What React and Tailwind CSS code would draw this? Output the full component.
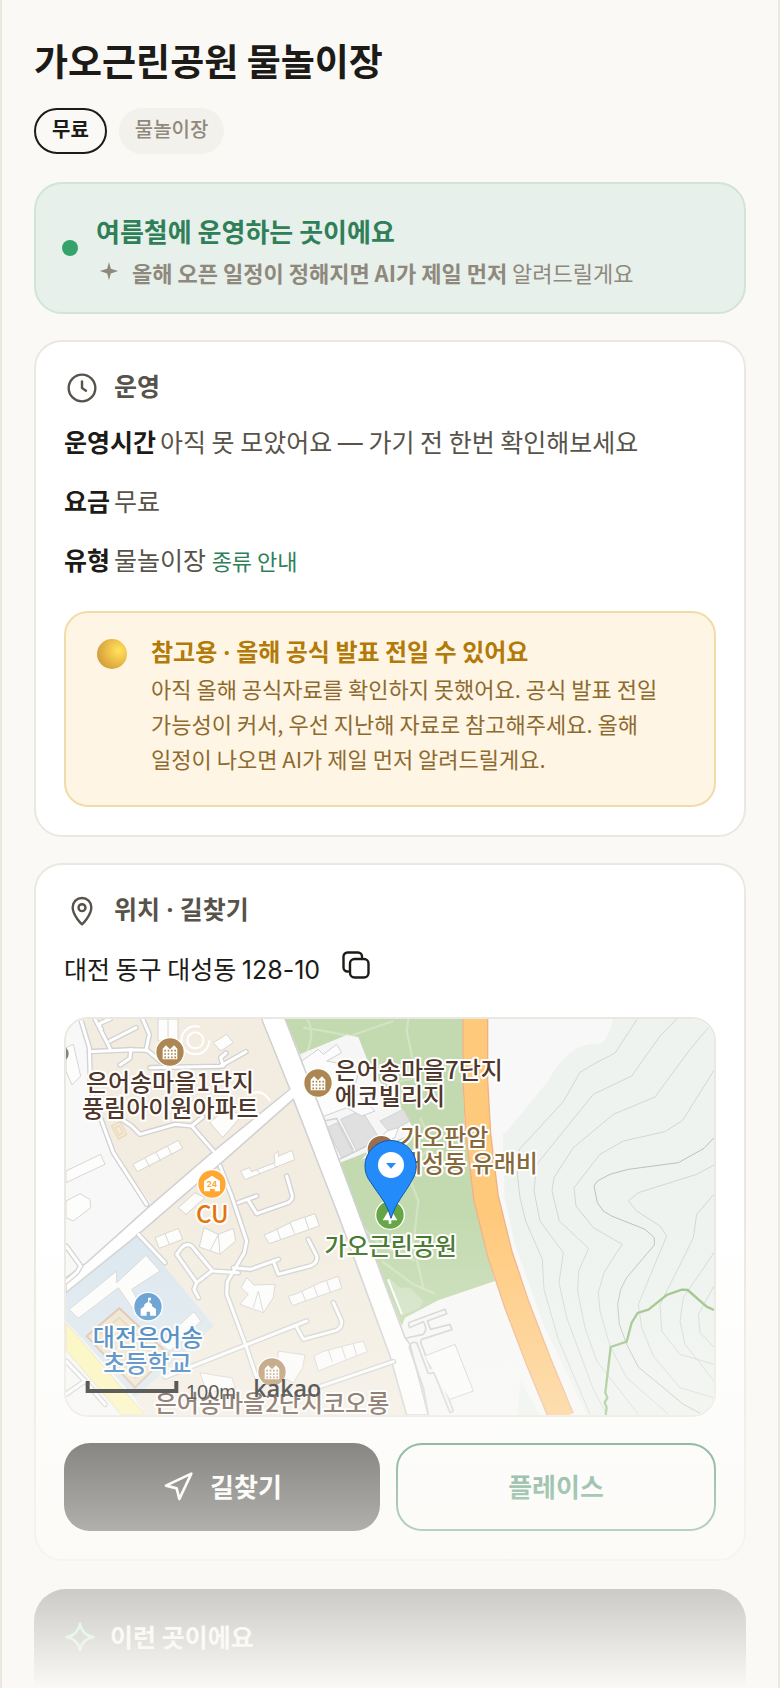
import { Navigation } from "lucide-react";

const roads = [
  "M62 24 L88 110 L92 240 L160 425 L260 580",
  "M88 122 L212 116 L262 118 L300 150",
  "M212 116 L210 142 L180 162",
  "M105 24 L150 112 M150 90 L228 50 M150 24 L122 36 Q114 44 124 54",
  "M248 24 L268 70 L258 118",
  "M270 170 L480 166 L558 122 M490 165 L482 140 L498 126",
  "M185 325 L215 345 L240 370 L345 340 L395 345 L465 425 M395 345 L428 318",
  "M480 465 L515 555 L560 690 L553 725 L502 812 L500 850 L560 1010 L590 1100",
  "M535 575 L590 555 M565 568 L590 608 L685 575 Q700 565 696 550 L680 495",
  "M520 770 L572 775 L655 745 M640 750 L655 790 L750 765 Q775 755 770 735 L745 685",
  "M535 785 L458 780 L395 705 Q380 695 365 710 L350 730 L410 815 L455 780 M410 815 L402 835 L415 860",
  "M315 1098 L740 930 M708 945 L730 985 L830 958 Q850 945 843 925 L820 875",
  "M770 1130 L1000 1052",
  "M235 670 L315 755",
  "M18 705 L62 765 L50 785 L18 812",
  "M18 1050 L75 1110 L135 1180 M75 1110 L18 1150",
];

const buildings = [
  "218,460 355,388 368,412 232,482",
  "542,480 568,470 575,482 645,455 642,432 655,420 655,436 696,418 704,446 555,506",
  "612,672 640,660 700,630 765,608 778,645 628,698",
  "685,856 710,848 780,815 835,796 845,832 697,884",
  "762,1035 788,1022 850,1005 910,990 922,1022 775,1080",
  "285,680 355,652 368,685 298,712",
  "432,650 475,670 520,652 527,690 480,730 418,708",
  "560,800 582,822 645,820 640,860 610,905 540,880 565,850 543,830",
  "450,335 500,290 545,315 488,380",
  "460,95 500,70 520,95 482,120",
  "294,24 354,24 354,90 294,90",
  "18,480 122,430 135,460 18,515",
  "18,570 60,548 90,565 92,590 40,630 18,620",
  "18,110 40,100 62,195 36,222 18,180",
  "28,895 170,780 170,815 258,733 300,780 215,835 245,890 230,910 175,830 55,922",
  "355,945 402,902 422,930 370,985 330,1020 300,1000",
  "355,590 405,545 435,560 378,610",
  "420,1085 480,1095 515,1100 526,1130 440,1145",
  "655,1020 735,1032 728,1070 700,1115 650,1090",
];

const contours = [
  "M1732 24 L1665 126 L1600 160 L1560 184 L1510 272 L1378 415 L1372 490 L1380 560 L1397 630 L1447 745 L1452 835 L1495 985 L1590 1210",
  "M1850 24 L1800 75 L1715 195 L1600 250 L1430 460 L1422 540 L1440 630 L1510 725 L1497 815 L1520 920 L1600 1135 L1640 1210",
  "M1945 50 L1890 115 L1785 258 L1660 310 L1540 410 L1482 500 L1476 540 L1498 630 L1586 712 L1556 780 L1553 840 L1575 950 L1610 1050 L1735 1210",
  "M1962 178 L1868 328 L1815 362 L1690 390 L1620 430 L1542 530 L1548 585 L1600 650 L1687 700 L1670 725 L1632 785 L1615 845 L1620 900 L1650 1005 L1700 1100 L1825 1210",
  "M1962 462 L1910 490 L1735 545 L1705 570 L1730 600 L1800 645 L1820 675 L1735 880 L1745 950 L1780 1035 L1860 1130 L1962 1160",
  "M1962 550 L1910 610 L1900 680 L1862 758 L1800 880 L1805 960 L1860 1030 L1962 1060",
  "M1962 725 L1870 860 L1860 930 L1875 1000 L1962 1110",
  "M1962 825 L1915 910 L1920 965 L1962 1008",
];

function PlaceIcon({ x, y, fill }) {
  return (
    <g transform={`translate(${x} ${y})`}>
      <circle r="43" fill={fill} stroke="#fff" strokeWidth="4" />
      <path d="M-22 22 V-10 L-12 -20 L0 -8 L12 -20 L22 -10 V22 Z" fill="#fff" />
      <path d="M-17 -4 H18 M-17 6 H18 M-17 16 H18" stroke={fill} strokeWidth="5" strokeDasharray="5 5" />
    </g>
  );
}

function MapLabel({ x, y, fill, anchor = "middle", children }) {
  return (
    <text
      x={x}
      y={y}
      fill={fill}
      textAnchor={anchor}
      fontSize="72"
      fontWeight="500"
      stroke="#fff"
      strokeWidth="12"
      strokeLinejoin="round"
      paintOrder="stroke"
    >
      {children}
    </text>
  );
}

function MapView() {
  return (
    <svg viewBox="18 24 1944 1188" preserveAspectRatio="xMidYMid slice" className="block h-full w-full" role="img" aria-label="지도">
      <rect x="18" y="24" width="1944" height="1188" fill="#f8f8f8" />
      {/* residential blocks */}
      <path d="M62 24 H605 L690 235 L455 425 L275 580 L160 425 L92 240 L88 110 Z" fill="#f3ede1" />
      <path d="M700 265 L485 455 L235 672 L462 945 L225 1160 L255 1212 H1040 L1000 1060 L990 1030 L830 600 Z" fill="#f3ede1" />
      {/* school */}
      <path d="M235 670 L462 945 L225 1160 L18 930 V845 Z" fill="#dbe7ef" />
      <path d="M178 892 L325 1030 L225 1130 L80 975 Z" fill="#eee3cc" stroke="#d8bfa8" strokeWidth="6" />
      <path d="M178 920 L290 1030 L225 1100 L110 975 Z" fill="none" stroke="#e6d3ae" strokeWidth="5" />
      <path d="M18 935 L255 1212 H185 L18 1018 Z" fill="#fdf6b4" stroke="#e4dfc4" strokeWidth="3" />
      {/* hillside */}
      <path d="M1660 24 Q1640 95 1620 98 Q1560 98 1530 125 Q1490 160 1460 215 L1340 362 L1328 370 L1334 560 L1365 700 L1450 940 L1580 1212 H1962 V24 Z" fill="#eef3ef" />
      <path d="M1382 1110 L1440 1212 H1372 Z" fill="#eef3ef" />
      {/* park */}
      <path d="M675 24 H1208 V210 L1215 350 L1230 480 L1260 630 L1285 740 L1305 810 L1135 868 L1035 920 L1025 945 L960 780 L840 460 L720 130 Z" fill="#c3dab0" />
      <path d="M740 24 Q770 60 735 140 M730 50 Q800 60 870 75 L1000 30 M860 68 L910 150 M1045 24 L1040 60 L1070 200 L1000 215 M1080 320 L1120 400 L1040 480 L1075 570 L1060 700 L1090 830 M965 750 L1060 820 L1125 848 M900 640 L960 700 L1065 750" fill="none" stroke="#d2e3c3" strokeWidth="7" />
      <path d="M985 800 L1020 830 L1050 830 L1090 870 L1080 890 L1030 912 Z" fill="#d0e2c1" />
      <path d="M720 130 L860 72 L895 78 L935 180 L1030 300 L1068 365 L840 455 L795 330 Z" fill="#f6f6f6" />
      <path d="M800 350 L832 335 L880 425 L845 440 Z M842 325 L905 298 L960 385 L890 420 Z M960 330 L1030 295 L1050 330 L990 365 Z" fill="#e0e0e0" stroke="#d2d2d2" strokeWidth="3" />
      <path d="M725 150 L775 115 L790 130 L830 100 L845 125 L800 150 L900 170 L880 240 L945 300 L905 315 L860 290 L780 320 Z M900 450 L960 420 L985 390 L1005 380 L1015 350 L980 360 Z" fill="#fcfcfc" stroke="#d2d2d2" strokeWidth="3" />
      <path d="M792 330 L830 322 L880 418 M838 445 L940 395" fill="none" stroke="#d2d2d2" strokeWidth="5" />
      {/* main roads */}
      <path d="M605 24 L690 235 L455 425 L275 580 L80 755 L18 800 V845 L235 670 L485 455 L700 265 L830 600 L990 1035 L1040 1212 H1105 L1050 1000 L1035 980 L960 780 L840 455 L795 330 L675 24 Z" fill="#fff" stroke="#d2d2d2" strokeWidth="5" strokeLinejoin="round" />
      <g fill="none" strokeLinecap="round" strokeLinejoin="round">
        {roads.map((d) => <path key={d} d={d} stroke="#d2d2d2" strokeWidth="17" />)}
        {roads.map((d) => <path key={d} d={d} stroke="#fff" strokeWidth="9" />)}
      </g>
      <path d="M608 24 L693 235 L458 427 L278 582 L84 757 L60 790 L233 666 L483 452 L701 258 L833 600 L957 780 L837 455 L672 24 Z" fill="#fff" />
      <g fill="#fdfdfc" stroke="#d8d6d2" strokeWidth="3">
        {buildings.map((points) => <polygon key={points} points={points} />)}
      </g>
      <path d="M255 442 L270 468 M288 424 L302 450 M322 406 L336 432 M590 476 L602 490 M640 456 L650 470 M650 652 L662 685 M690 635 L704 668 M735 620 L746 654 M725 840 L737 870 M762 826 L774 858 M800 810 L811 844 M805 1018 L817 1052 M845 1006 L857 1044 M880 998 L890 1034 M315 668 L328 700 M475 670 L450 720 M475 670 L480 730 M595 840 L580 890 M595 840 L610 905 M324 24 V80" stroke="#d8d6d2" strokeWidth="3" />
      <g fill="none" stroke="#fff" strokeWidth="6">
        <circle cx="406" cy="88" r="24" />
        <circle cx="406" cy="88" r="42" strokeDasharray="210 54" />
        <path d="M570 250 Q605 230 630 270" />
      </g>
      <path d="M155 345 L180 332 L200 370 L176 384 Z M166 350 L178 344 L188 366 L178 372 Z" fill="none" stroke="#ecdcbb" strokeWidth="5" />
      {/* parking lot below the park */}
      <g fill="none" stroke="#d2d2d2" strokeWidth="5" strokeLinejoin="round">
        <path d="M1045 935 L1155 895 L1160 908 L1102 930 L1112 955 L1170 940 L1176 956 L1085 985 Q1080 990 1084 1000 L1112 1072 L1130 1065 L1180 1200 L1170 1205 L1122 1085 L1105 1088" />
        <path d="M1045 935 L1048 950 L1090 932 Q1105 955 1090 970 L1035 982" />
        <path d="M1105 1212 L1090 1130 L1048 1010 Q1050 990 1070 995 L1105 1088" />
        <path d="M1095 1035 L1185 1000 L1240 1140 L1170 1165" fill="#fdfdfd" strokeWidth="3" />
      </g>
      <path d="M984 805 L1026 910" stroke="#fff" strokeWidth="6" />
      {/* highway */}
      <path d="M1246 10 V210 L1255 370 L1278 560 L1320 730 L1370 880 L1435 1050 L1505 1220" fill="none" stroke="#f0b285" strokeWidth="78" strokeLinejoin="round" />
      <path d="M1246 10 V210 L1255 370 L1278 560 L1320 730 L1370 880 L1435 1050 L1505 1220" fill="none" stroke="#ffc97c" strokeWidth="70" strokeLinejoin="round" />
      <g fill="none" stroke="#d0d8d1" strokeWidth="3">
        {contours.map((d) => <path key={d} d={d} />)}
      </g>
      <path d="M1962 380 L1932 412 L1855 455 L1705 475 L1650 490 L1612 510 L1602 525 L1612 575 L1630 600 L1655 615 L1755 655 L1783 680 L1783 702 L1700 800 L1682 835 L1673 880 L1678 940 L1700 1000 L1735 1068 L1870 1180 L1930 1212" fill="none" stroke="#bcc2b6" strokeWidth="3" />
      <path d="M1962 897 L1940 887 L1883 837 L1865 836 L1820 852 L1765 896 L1733 906 L1715 935 L1700 992 L1652 1008 L1636 1145 L1642 1160 L1634 1175 L1640 1190 L1637 1212" fill="none" stroke="#94be7e" strokeWidth="7" />
      {/* places */}
      <circle cx="2" cy="128" r="24" fill="#7d8586" />
      <PlaceIcon x={330} y={123} fill="#ac8753" />
      <PlaceIcon x={774} y={216} fill="#ac8753" />
      <PlaceIcon x={636} y={1083} fill="#b08a5c" />
      <circle cx="456" cy="519" r="43" fill="#ffa730" stroke="#fff" strokeWidth="4" />
      <path d="M432 541 V510 L456 494 L480 510 V541 H464 V534 H450 V541 Z" fill="#fff" />
      <text x="456" y="528" textAnchor="middle" fontSize="24" fontWeight="700" fill="#ffa730" className="font-[Inter,sans-serif]">24</text>
      <circle cx="264" cy="887" r="43" fill="#5093ce" stroke="#fff" strokeWidth="4" />
      <path d="M242 914 V894 L253 886 V880 L264 872 V860 H273 V868 H268 V874 L276 880 V886 L288 894 V914 H270 V902 H260 V914 Z" fill="#fff" />
      <circle cx="964" cy="416" r="43" fill="#9a6f4c" stroke="#fff" strokeWidth="4" />
      <circle cx="990" cy="612" r="43" fill="#64a544" stroke="#fff" strokeWidth="4" />
      <path d="M990 592 L968 628 H986 V638 H994 V628 H1012 Z" fill="#fff" />
      <MapLabel x={330} y={241} fill="#4f372c">은어송마을1단지</MapLabel>
      <MapLabel x={331} y={319} fill="#4f372c">풍림아이원아파트</MapLabel>
      <MapLabel x={824} y={204} fill="#4f372c" anchor="start">은어송마을7단지</MapLabel>
      <MapLabel x={824} y={283} fill="#4f372c" anchor="start">에코빌리지</MapLabel>
      <MapLabel x={1020} y={405} fill="#86693a" anchor="start">가오판암</MapLabel>
      <MapLabel x={1020} y={484} fill="#86693a" anchor="start">대성동 유래비</MapLabel>
      <MapLabel x={992} y={731} fill="#3f7327">가오근린공원</MapLabel>
      <MapLabel x={457} y={637} fill="#e5730d">CU</MapLabel>
      <MapLabel x={264} y={1005} fill="#2470b8">대전은어송</MapLabel>
      <MapLabel x={262} y={1083} fill="#2470b8">초등학교</MapLabel>
      <MapLabel x={636} y={1204} fill="#503629">은어송마을2단지코오롱</MapLabel>
      <path d="M993 622 C978 570 958 555 933 515 A77 77 0 1 1 1056 508 C1030 555 1010 570 993 622 Z" fill="#238cfa" stroke="#1258b0" strokeWidth="3" />
      <circle cx="993" cy="462" r="39" fill="#fff" />
      <path d="M978 456 H1008 L993 473 Z" fill="#238cfa" />
      {/* scale bar */}
      <path d="M83 1110 V1140 H349 V1110" fill="none" stroke="#000" strokeWidth="12" />
      <text x="378" y="1163" fontSize="60" fill="#000" className="font-['Liberation_Sans',sans-serif]">100m</text>
      <text x="580" y="1157" fontSize="70" fontWeight="600" fill="#000" className="font-['Open_Sans',sans-serif]">kakao</text>
    </svg>
  );
}

function ClockIcon() {
  return (
    <svg viewBox="0 0 24 24" className="size-8 shrink-0" fill="none" stroke="currentColor" strokeWidth="1.8" strokeLinecap="round" strokeLinejoin="round" aria-hidden="true">
      <circle cx="12" cy="12" r="10" />
      <path d="M12 7v5l3 2" />
    </svg>
  );
}

function PinIcon() {
  return (
    <svg viewBox="0 0 24 24" className="size-8 shrink-0" fill="none" stroke="currentColor" strokeWidth="1.8" strokeLinejoin="round" aria-hidden="true">
      <path d="M12 22C12 22 19 15.5 19 9.2A7 7 0 0 0 5 9.2C5 15.5 12 22 12 22Z" />
      <circle cx="12" cy="9.5" r="2.6" />
    </svg>
  );
}

function CopyIcon() {
  return (
    <svg viewBox="0 0 28 28" className="size-7" fill="none" stroke="currentColor" strokeWidth="2.4" strokeLinecap="round" aria-hidden="true">
      <rect x="8" y="8" width="18.5" height="18.5" rx="4.5" />
      <path d="M6 20.5H5.500A4 4 0 0 1 1.500 16.500V5.500A4 4 0 0 1 5.500 1.500H16A4 4 0 0 1 20 5.500V6" />
    </svg>
  );
}

function Latin({ children }) {
  return <span className="font-[Inter,sans-serif] leading-none">{children}</span>;
}

function Card({ icon, title, children }) {
  return (
    <section className="mt-[26px] rounded-[28px] border-2 border-[#eae8e0] bg-white px-7 pt-7 pb-7">
      <h2 className="flex h-9 items-center gap-4 pl-0.5 text-[25px] font-bold text-[#57534a]">
        {icon}
        <span className="pb-1">{title}</span>
      </h2>
      {children}
    </section>
  );
}

function InfoRow({ label, children }) {
  return (
    <div className="flex items-baseline gap-1 text-[25px] leading-[39px] text-[#57534a]">
      <dt className="font-bold text-[#1c1b17]">{label}</dt>
      <dd>{children}</dd>
    </div>
  );
}

export default function App() {
  return (
    <div className="relative h-screen overflow-hidden border-x-2 border-[#eae8df] bg-[#fbf9f5] px-8 font-['Noto_Sans_CJK_KR',sans-serif] text-[#1c1b17]">
      <h1 className="pt-[34px] text-[37px] leading-[52px] font-bold">가오근린공원 물놀이장</h1>
      <div className="mt-[22px] flex gap-3 text-xl font-bold">
        <span className="flex h-[46px] items-center rounded-full border-2 border-[#1c1b17] px-4 pb-1">무료</span>
        <span className="flex h-[46px] items-center rounded-full bg-[#f3f1ec] px-4 pb-1 font-medium text-[#8f897d]">물놀이장</span>
      </div>

      <section className="mt-7 flex items-center gap-[18px] rounded-[28px] border-2 border-[#cfe5d8] bg-[#e7f0eb] px-[26px]">
        <span className="size-4 shrink-0 rounded-full bg-[#35a26c]" />
        <div className="pt-[29px] pb-6">
          <p className="text-[26px] leading-9 font-bold text-[#2f8059]">여름철에 운영하는 곳이에요</p>
          <p className="mt-[7px] flex items-center text-[22px] leading-8 text-[#8f897d]">
            <svg viewBox="0 0 24 24" className="mr-3 ml-0.5 size-[22px] shrink-0" fill="currentColor" aria-hidden="true">
              <path d="M12 1 L14 8.500 L22 11 L14 13.500 L12 21 L10 13.500 L2 11 L10 8.500 Z" />
            </svg>
            <span><strong className="font-bold">올해 오픈 일정이 정해지면 AI가 제일 먼저</strong> 알려드릴게요</span>
          </p>
        </div>
      </section>

      <Card icon={<ClockIcon />} title="운영">
        <dl className="mt-4 flex flex-col gap-5">
          <InfoRow label="운영시간">아직 못 모았어요 <Latin>—</Latin> 가기 전 한번 확인해보세요</InfoRow>
          <InfoRow label="요금">무료</InfoRow>
          <InfoRow label="유형">
            물놀이장 <a href="#types" className="text-[22px] text-[#2f8059]">종류 안내</a>
          </InfoRow>
        </dl>
        <div className="mt-[31px] flex gap-6 rounded-3xl border-2 border-[#f0dca8] bg-[#fff5e4] px-[31px] pt-5 pb-[29px]">
          <span className="mt-1.5 size-[30px] shrink-0 rounded-full bg-[radial-gradient(circle_at_72%_38%,#ffe45c_0%,#f3c74d_30%,#d9a63e_68%,#cf8a5a_100%)]" />
          <div className="text-[#8d6a2f]">
            <h3 className="text-2xl leading-9 font-bold text-[#b27a08]">참고용 <Latin>·</Latin> 올해 공식 발표 전일 수 있어요</h3>
            <p className="mt-0.5 text-[22px] leading-[35px] break-keep">
              아직 올해 공식자료를 확인하지 못했어요. 공식 발표 전일 가능성이 커서, 우선 지난해 자료로 참고해주세요. 올해 일정이 나오면 AI가 제일 먼저 알려드릴게요.
            </p>
          </div>
        </div>
      </Card>

      <Card icon={<PinIcon />} title={<>위치 <Latin>·</Latin> 길찾기</>}>
        <div className="mt-[22px] flex h-9 items-center gap-[22px] text-[25px]">
          <span>대전 동구 대성동 <Latin>128-10</Latin></span>
          <button type="button" aria-label="주소 복사" className="pb-2">
            <CopyIcon />
          </button>
        </div>
        <div className="mt-[30px] aspect-[652/400] overflow-hidden rounded-3xl border-2 border-[#eae8e0]">
          <MapView />
        </div>
        <div className="mt-[26px] flex gap-4 text-[26px] font-bold">
          <button type="button" className="flex h-[88px] flex-1 items-center justify-center gap-4 rounded-[26px] bg-[#1c1b17] text-white">
            <Navigation className="size-8" strokeWidth={2} />
            <span className="pb-1">길찾기</span>
          </button>
          <button type="button" className="h-[88px] flex-1 rounded-[26px] border-2 border-[#2f8059] bg-white pb-1 text-[#2f8059]">
            플레이스
          </button>
        </div>
      </Card>

      <section className="mt-7 rounded-[32px] bg-[#1c1b17] px-[30px] pt-7 pb-32">
        <h2 className="flex h-10 items-center gap-3.5 text-[25px] font-bold text-white">
          <svg viewBox="0 0 24 24" className="size-8" fill="none" stroke="#6ee0a0" strokeWidth="2" strokeLinejoin="round" aria-hidden="true">
            <path d="M12 2 Q13.5 10.5 22 12 Q13.5 13.5 12 22 Q10.5 13.5 2 12 Q10.5 10.5 12 2 Z" />
          </svg>
          이런 곳이에요
        </h2>
      </section>

      <div className="pointer-events-none absolute inset-x-0 bottom-0 h-[28%] bg-linear-to-b from-[#faf9f5]/0 to-[#faf9f5]" />
    </div>
  );
}
